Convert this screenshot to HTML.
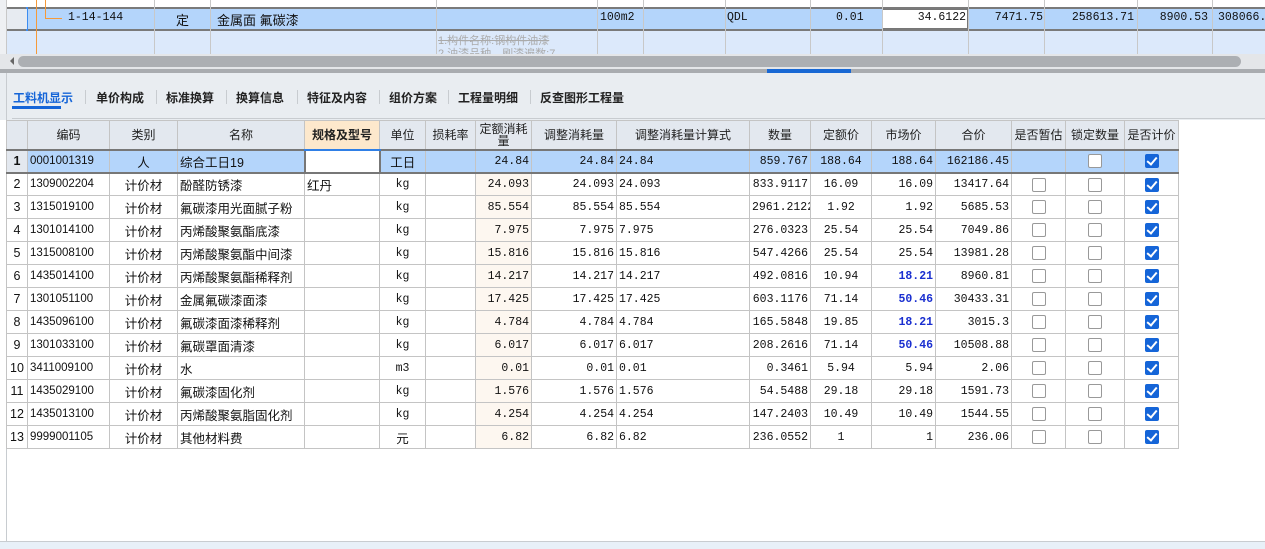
<!DOCTYPE html>
<html><head><meta charset="utf-8"><style>
*{margin:0;padding:0;box-sizing:border-box}
body{width:1265px;height:549px;overflow:hidden;background:#fff;font-family:"Liberation Sans","WenQuanYi Zen Hei","Noto Sans CJK SC",sans-serif;position:relative;font-size:12px;color:#111}
.a{position:absolute}
.m{font-family:"Liberation Mono","WenQuanYi Zen Hei",monospace;font-size:11.5px}
.r{position:absolute;text-align:right;font-family:"Liberation Mono",monospace;font-size:11.5px;top:11px}
.vl{position:absolute;width:1px;background:#c8c8c8}
table{position:absolute;left:6px;top:120px;border-collapse:collapse;table-layout:fixed;width:1172px}
td,th{border:1px solid #c4c4c4;height:23px;padding:0 2px;white-space:nowrap;overflow:hidden;font-weight:normal;font-size:12.5px}
th{height:29px;background:#e3e8ef;text-align:center;line-height:12px;color:#222;font-size:12px}
td.n{font-family:"Liberation Mono",monospace;font-size:11.5px;text-align:right}
td.c{text-align:center}
td.q{background:#fdf7f0}
.cb{display:inline-block;width:14px;height:14px;border:1px solid #999;border-radius:2px;background:#fff;vertical-align:middle}
.ck{display:inline-block;width:14px;height:14px;border-radius:2px;background:#1565d8;vertical-align:middle;position:relative}
.ck:after{content:"";position:absolute;left:4px;top:1px;width:4px;height:8px;border:solid #fff;border-width:0 2px 2px 0;transform:rotate(40deg)}
tr.sel td{background:#b4d5fb;border-top:2px solid #777;border-bottom:2px solid #777}
.tab{position:absolute;top:89px;font-size:12px;color:#222;font-weight:bold;white-space:nowrap}
.sep{position:absolute;top:90px;width:1px;height:14px;background:#c8ccd0}
</style></head><body>
<div class="a" style="left:0;top:7px;width:1265px;height:24px;background:#b4d5fb;border-top:2px solid #7a7a7a;border-bottom:2px solid #7a7a7a"></div>
<div class="a" style="left:882px;top:9px;width:86px;height:20px;background:#fff;border:1px solid #777"></div>
<div class="a" style="left:26px;top:7px;width:2px;height:24px;background:#3c8cf0"></div>
<div class="a" style="left:0;top:31px;width:1265px;height:23px;background:#dce9fb"></div>
<div class="a" style="left:0;top:0;width:6px;height:54px;background:#eef0f3"></div>
<div class="a" style="left:6px;top:9px;width:21px;height:20px;background:#e7ebf1"></div>
<div class="vl" style="left:6px;top:0;height:54px"></div>
<div class="vl" style="left:154px;top:0;height:54px"></div>
<div class="vl" style="left:210px;top:0;height:54px"></div>
<div class="vl" style="left:436px;top:0;height:54px"></div>
<div class="vl" style="left:597px;top:0;height:54px"></div>
<div class="vl" style="left:643px;top:0;height:54px"></div>
<div class="vl" style="left:725px;top:0;height:54px"></div>
<div class="vl" style="left:810px;top:0;height:54px"></div>
<div class="vl" style="left:882px;top:0;height:54px"></div>
<div class="vl" style="left:968px;top:0;height:54px"></div>
<div class="vl" style="left:1044px;top:0;height:54px"></div>
<div class="vl" style="left:1137px;top:0;height:54px"></div>
<div class="vl" style="left:1212px;top:0;height:54px"></div>
<div class="a" style="left:36px;top:0;width:1px;height:54px;background:#f59a3a"></div>
<div class="a" style="left:45px;top:0;width:1px;height:18px;background:#f59a3a"></div>
<div class="a" style="left:45px;top:18px;width:17px;height:1px;background:#f59a3a"></div>
<div class="a m" style="left:68px;top:11px">1-14-144</div>
<div class="a" style="left:176px;top:10px;font-size:13px">定</div>
<div class="a" style="left:217px;top:10px;font-size:13px">金属面 氟碳漆</div>
<div class="a m" style="left:600px;top:11px">100m2</div>
<div class="a m" style="left:727px;top:11px">QDL</div>
<div class="a m" style="left:836px;top:11px">0.01</div>
<div class="r" style="right:299px">34.6122</div>
<div class="r" style="right:222px">7471.75</div>
<div class="r" style="right:131px">258613.71</div>
<div class="r" style="right:57px">8900.53</div>
<div class="a m" style="left:1218px;top:11px">308066.9</div>
<div class="a" style="left:438px;top:32px;font-size:11px;color:#aaa;text-decoration:line-through">1.构件名称:钢构件油漆</div>
<div class="a" style="left:438px;top:45px;font-size:11px;color:#aaa;height:9px;overflow:hidden">2.油漆品种、刷漆遍数:7</div>
<div class="a" style="left:0;top:54px;width:1265px;height:15px;background:#e4e6e9"></div>
<div class="a" style="left:10px;top:57px;width:0;height:0;border-top:4px solid transparent;border-bottom:4px solid transparent;border-right:4px solid #666"></div>
<div class="a" style="left:18px;top:56px;width:1223px;height:11px;background:#acafb3;border-radius:6px"></div>
<div class="a" style="left:0;top:69px;width:1265px;height:4px;background:#a9acb0"></div>
<div class="a" style="left:767px;top:69px;width:84px;height:4px;background:#1868d4"></div>
<div class="a" style="left:0;top:73px;width:1265px;height:47px;background:#e9edf1"></div>
<div class="a" style="left:6px;top:73px;width:1px;height:476px;background:#c8ccd0"></div>
<div class="tab" style="left:13px;color:#1565d8">工料机显示</div>
<div class="a" style="left:12px;top:106px;width:49px;height:3px;background:#1565d8"></div>
<div class="sep" style="left:85px"></div>
<div class="tab" style="left:96px">单价构成</div>
<div class="sep" style="left:156px"></div>
<div class="tab" style="left:166px">标准换算</div>
<div class="sep" style="left:226px"></div>
<div class="tab" style="left:236px">换算信息</div>
<div class="sep" style="left:297px"></div>
<div class="tab" style="left:307px">特征及内容</div>
<div class="sep" style="left:379px"></div>
<div class="tab" style="left:389px">组价方案</div>
<div class="sep" style="left:448px"></div>
<div class="tab" style="left:458px">工程量明细</div>
<div class="sep" style="left:530px"></div>
<div class="tab" style="left:540px">反查图形工程量</div>
<div class="a" style="left:12px;top:118px;width:1253px;height:1px;background:#c8ccd0"></div>
<table>
<colgroup><col style="width:21px"><col style="width:82px"><col style="width:68px"><col style="width:127px"><col style="width:75px"><col style="width:46px"><col style="width:50px"><col style="width:56px"><col style="width:85px"><col style="width:133px"><col style="width:61px"><col style="width:61px"><col style="width:64px"><col style="width:76px"><col style="width:54px"><col style="width:59px"><col style="width:54px"></colgroup>
<tr><th></th><th>编码</th><th>类别</th><th>名称</th><th style="background:#fde8cc;font-weight:bold;border-bottom:2px solid #2f7fe6">规格及型号</th><th>单位</th><th>损耗率</th><th>定额消耗<br>量</th><th>调整消耗量</th><th>调整消耗量计算式</th><th>数量</th><th>定额价</th><th>市场价</th><th>合价</th><th>是否暂估</th><th>锁定数量</th><th>是否计价</th></tr>
<tr class="sel"><td class="c" style="font-weight:bold;background:#e3e8ef">1</td><td style="font-size:11.5px">0001001319</td><td class="c">人</td><td>综合工日19</td><td style="background:#fff;border:2px solid #777"></td><td class="c">工日</td><td></td><td class="n">24.84</td><td class="n">24.84</td><td class="m">24.84</td><td class="n">859.767</td><td class="n" style="text-align:center">188.64</td><td class="n">188.64</td><td class="n">162186.45</td><td></td><td class="c"><span class="cb"></span></td><td class="c"><span class="ck"></span></td></tr>
<tr><td class="c">2</td><td style="font-size:11.5px">1309002204</td><td class="c">计价材</td><td>酚醛防锈漆</td><td>红丹</td><td class="c m">kg</td><td></td><td class="n q">24.093</td><td class="n">24.093</td><td class="m">24.093</td><td class="n">833.9117</td><td class="n" style="text-align:center">16.09</td><td class="n">16.09</td><td class="n">13417.64</td><td class="c"><span class="cb"></span></td><td class="c"><span class="cb"></span></td><td class="c"><span class="ck"></span></td></tr>
<tr><td class="c">3</td><td style="font-size:11.5px">1315019100</td><td class="c">计价材</td><td>氟碳漆用光面腻子粉</td><td></td><td class="c m">kg</td><td></td><td class="n q">85.554</td><td class="n">85.554</td><td class="m">85.554</td><td class="n">2961.2122</td><td class="n" style="text-align:center">1.92</td><td class="n">1.92</td><td class="n">5685.53</td><td class="c"><span class="cb"></span></td><td class="c"><span class="cb"></span></td><td class="c"><span class="ck"></span></td></tr>
<tr><td class="c">4</td><td style="font-size:11.5px">1301014100</td><td class="c">计价材</td><td>丙烯酸聚氨酯底漆</td><td></td><td class="c m">kg</td><td></td><td class="n q">7.975</td><td class="n">7.975</td><td class="m">7.975</td><td class="n">276.0323</td><td class="n" style="text-align:center">25.54</td><td class="n">25.54</td><td class="n">7049.86</td><td class="c"><span class="cb"></span></td><td class="c"><span class="cb"></span></td><td class="c"><span class="ck"></span></td></tr>
<tr><td class="c">5</td><td style="font-size:11.5px">1315008100</td><td class="c">计价材</td><td>丙烯酸聚氨酯中间漆</td><td></td><td class="c m">kg</td><td></td><td class="n q">15.816</td><td class="n">15.816</td><td class="m">15.816</td><td class="n">547.4266</td><td class="n" style="text-align:center">25.54</td><td class="n">25.54</td><td class="n">13981.28</td><td class="c"><span class="cb"></span></td><td class="c"><span class="cb"></span></td><td class="c"><span class="ck"></span></td></tr>
<tr><td class="c">6</td><td style="font-size:11.5px">1435014100</td><td class="c">计价材</td><td>丙烯酸聚氨酯稀释剂</td><td></td><td class="c m">kg</td><td></td><td class="n q">14.217</td><td class="n">14.217</td><td class="m">14.217</td><td class="n">492.0816</td><td class="n" style="text-align:center">10.94</td><td class="n" style="color:#1a2fd0;font-weight:bold">18.21</td><td class="n">8960.81</td><td class="c"><span class="cb"></span></td><td class="c"><span class="cb"></span></td><td class="c"><span class="ck"></span></td></tr>
<tr><td class="c">7</td><td style="font-size:11.5px">1301051100</td><td class="c">计价材</td><td>金属氟碳漆面漆</td><td></td><td class="c m">kg</td><td></td><td class="n q">17.425</td><td class="n">17.425</td><td class="m">17.425</td><td class="n">603.1176</td><td class="n" style="text-align:center">71.14</td><td class="n" style="color:#1a2fd0;font-weight:bold">50.46</td><td class="n">30433.31</td><td class="c"><span class="cb"></span></td><td class="c"><span class="cb"></span></td><td class="c"><span class="ck"></span></td></tr>
<tr><td class="c">8</td><td style="font-size:11.5px">1435096100</td><td class="c">计价材</td><td>氟碳漆面漆稀释剂</td><td></td><td class="c m">kg</td><td></td><td class="n q">4.784</td><td class="n">4.784</td><td class="m">4.784</td><td class="n">165.5848</td><td class="n" style="text-align:center">19.85</td><td class="n" style="color:#1a2fd0;font-weight:bold">18.21</td><td class="n">3015.3</td><td class="c"><span class="cb"></span></td><td class="c"><span class="cb"></span></td><td class="c"><span class="ck"></span></td></tr>
<tr><td class="c">9</td><td style="font-size:11.5px">1301033100</td><td class="c">计价材</td><td>氟碳罩面清漆</td><td></td><td class="c m">kg</td><td></td><td class="n q">6.017</td><td class="n">6.017</td><td class="m">6.017</td><td class="n">208.2616</td><td class="n" style="text-align:center">71.14</td><td class="n" style="color:#1a2fd0;font-weight:bold">50.46</td><td class="n">10508.88</td><td class="c"><span class="cb"></span></td><td class="c"><span class="cb"></span></td><td class="c"><span class="ck"></span></td></tr>
<tr><td class="c">10</td><td style="font-size:11.5px">3411009100</td><td class="c">计价材</td><td>水</td><td></td><td class="c m">m3</td><td></td><td class="n q">0.01</td><td class="n">0.01</td><td class="m">0.01</td><td class="n">0.3461</td><td class="n" style="text-align:center">5.94</td><td class="n">5.94</td><td class="n">2.06</td><td class="c"><span class="cb"></span></td><td class="c"><span class="cb"></span></td><td class="c"><span class="ck"></span></td></tr>
<tr><td class="c">11</td><td style="font-size:11.5px">1435029100</td><td class="c">计价材</td><td>氟碳漆固化剂</td><td></td><td class="c m">kg</td><td></td><td class="n q">1.576</td><td class="n">1.576</td><td class="m">1.576</td><td class="n">54.5488</td><td class="n" style="text-align:center">29.18</td><td class="n">29.18</td><td class="n">1591.73</td><td class="c"><span class="cb"></span></td><td class="c"><span class="cb"></span></td><td class="c"><span class="ck"></span></td></tr>
<tr><td class="c">12</td><td style="font-size:11.5px">1435013100</td><td class="c">计价材</td><td>丙烯酸聚氨脂固化剂</td><td></td><td class="c m">kg</td><td></td><td class="n q">4.254</td><td class="n">4.254</td><td class="m">4.254</td><td class="n">147.2403</td><td class="n" style="text-align:center">10.49</td><td class="n">10.49</td><td class="n">1544.55</td><td class="c"><span class="cb"></span></td><td class="c"><span class="cb"></span></td><td class="c"><span class="ck"></span></td></tr>
<tr><td class="c">13</td><td style="font-size:11.5px">9999001105</td><td class="c">计价材</td><td>其他材料费</td><td></td><td class="c">元</td><td></td><td class="n q">6.82</td><td class="n">6.82</td><td class="m">6.82</td><td class="n">236.0552</td><td class="n" style="text-align:center">1</td><td class="n">1</td><td class="n">236.06</td><td class="c"><span class="cb"></span></td><td class="c"><span class="cb"></span></td><td class="c"><span class="ck"></span></td></tr>
</table>
<div class="a" style="left:0;top:541px;width:1265px;height:8px;background:#e8f0f8;border-top:1px solid #c8ccd0"></div>
</body></html>
